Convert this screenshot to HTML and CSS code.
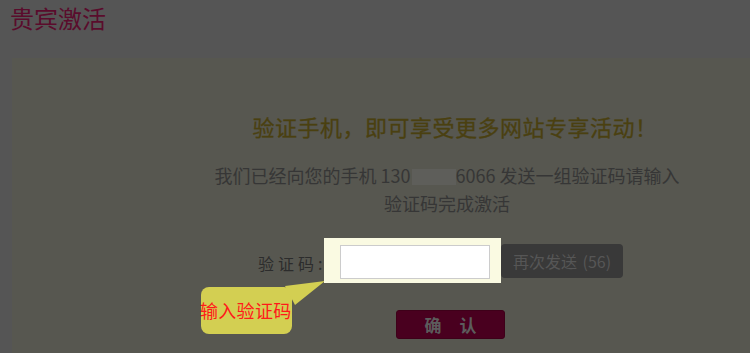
FILE: index.html
```html
<!DOCTYPE html>
<html lang="zh">
<head>
<meta charset="utf-8">
<title>贵宾激活</title>
<link rel="stylesheet" href="styles.css">
</head>
<body>
<h1 class="page-title">贵宾激活</h1>
<div class="card">
  <div class="card-inner">
    <h2 class="headline">验证手机，即可享受更多网站专享活动！</h2>
    <p class="desc">我们已经向您的手机 130<span class="mask"></span>6066 发送一组验证码请输入<br>验证码完成激活</p>
    <div class="form-row">
      <label class="label">验证码:</label>
      <div class="highlight"><input class="code-input" type="text"></div>
      <button class="resend">再次发送 (56)</button>
      <div class="tip">输入验证码</div>
      <svg class="tip-arrow" width="50" height="35" viewBox="0 0 50 35"><polygon points="5,10 45,5 15,29" fill="#d3cf52"/></svg>
    </div>
    <div class="confirm-row">
      <button class="confirm"><span>确</span><span>认</span></button>
    </div>
  </div>
</div>
</body>
</html>
```

FILE: styles.css
```css
html, body {
  margin: 0;
  padding: 0;
}
html {
  overflow: hidden;
}
body {
  background: #555555;
  font-family: "Noto Sans CJK SC", "Noto Sans", sans-serif;
}
.page-title {
  margin: 0;
  padding: 0 0 0 10px;
  line-height: normal;
  font-size: 24px;
  font-weight: normal;
  color: #5a0c2c;
}
.card {
  margin: 23px 0 0 12px;
  width: 738px;
  height: 295px;
  background: #575750;
  overflow: hidden;
}
.card-inner {
  width: 870px;
  padding-top: 53px;
}
.headline {
  margin: 0;
  padding-left: 16px;
  text-align: center;
  font-size: 22px;
  letter-spacing: 0.5px;
  line-height: 30px;
  font-weight: normal;
  color: #4a4010;
  -webkit-text-stroke: 0.3px #4a4010;
}
.desc {
  margin: 20px auto 0;
  width: 500px;
  text-align: center;
  font-size: 18px;
  line-height: 28px;
  color: #363636;
}
.mask {
  display: inline-block;
  width: 44px;
  height: 16px;
  background: #5e5e5a;
  vertical-align: -2px;
  margin-left: 1px;
}
.form-row {
  position: relative;
  margin-top: 21px;
  padding-left: 246px;
  display: flex;
  align-items: center;
  height: 45px;
}
.label {
  font-size: 16px;
  letter-spacing: 4px;
  color: #2c2c2c;
  width: 66px;
  white-space: nowrap;
  margin-top: 4px;
}
.highlight {
  background: #fafae2;
  padding: 7px 11px 4px 16px;
  position: relative;
  z-index: 2;
}
.code-input {
  display: block;
  width: 150px;
  height: 34px;
  box-sizing: border-box;
  border: 1px solid #cccccc;
  background: #ffffff;
  margin: 0;
  outline: none;
}
.resend {
  margin: 0 0 -1px 0;
  width: 122px;
  height: 34px;
  border: none;
  border-radius: 4px;
  background: #393939;
  color: #565656;
  font-family: inherit;
  font-size: 16px;
  word-spacing: 2px;
  padding: 0;
}
.tip {
  position: absolute;
  left: 189px;
  top: 49px;
  width: 91px;
  height: 47px;
  border-radius: 8px;
  background: #d3cf52;
  color: #ff1a1a;
  font-size: 18px;
  letter-spacing: 0.3px;
  line-height: 47px;
  white-space: nowrap;
  text-indent: -1px;
}
.tip-arrow {
  position: absolute;
  left: 268px;
  top: 38px;
}
.confirm-row {
  margin-top: 27px;
  padding-left: 384px;
}
.confirm {
  display: flex;
  justify-content: center;
  align-items: center;
  gap: 18px;
  width: 109px;
  height: 29px;
  padding: 0;
  border: 1px solid #3e0019;
  border-radius: 3px;
  background: #49001f;
  color: #5c5c5c;
  font-family: inherit;
  font-size: 17px;
  font-weight: bold;
}
```
